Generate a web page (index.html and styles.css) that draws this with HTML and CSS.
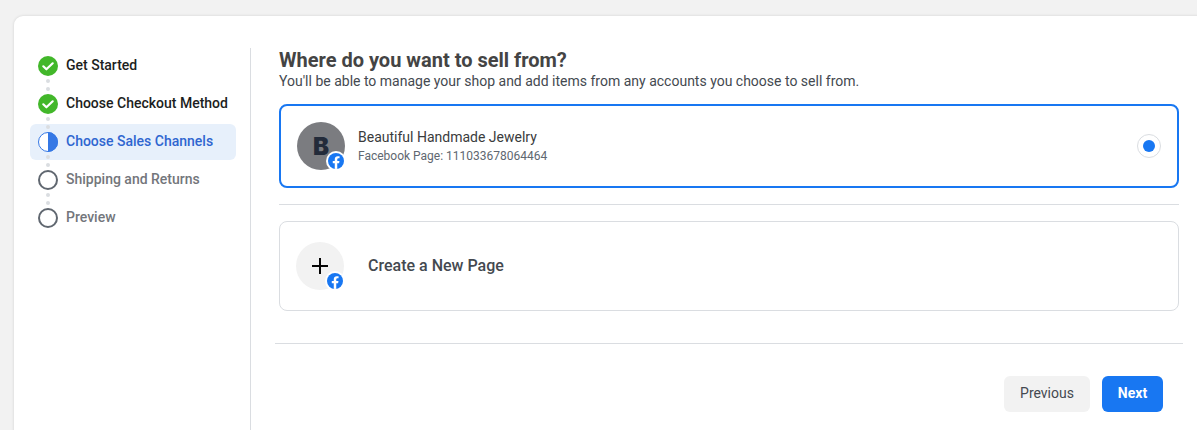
FILE: index.html
```html
<!DOCTYPE html>
<html lang="en">
<head>
<meta charset="utf-8">
<title>Where do you want to sell from?</title>
<link rel="stylesheet" href="styles.css">
</head>
<body>
<svg class="defs" width="0" height="0" aria-hidden="true">
  <symbol id="fb" viewBox="0 0 16 16">
    <circle cx="8" cy="8" r="8" fill="#1877f2"/>
    <path fill="#fff" d="M11.1 10.3l.36-2.3H9.25V6.5c0-.63.31-1.25 1.3-1.25h1V3.3s-.91-.16-1.78-.16c-1.82 0-3 1.1-3 3.1V8h-2v2.3h2v5.56a8 8 0 0 0 2.48 0V10.3z"/>
  </symbol>
  <symbol id="done" viewBox="0 0 20 20">
    <circle cx="10" cy="10" r="10" fill="#42b72a"/>
    <path fill="none" stroke="#fff" stroke-width="2.2" stroke-linecap="round" stroke-linejoin="round" d="M5.3 10.3l3.1 3 6.3-6"/>
  </symbol>
  <symbol id="half" viewBox="0 0 20 20">
    <circle cx="10" cy="10" r="9.5" fill="#fff" stroke="#3578e5" stroke-width="1"/>
    <path fill="#3578e5" d="M10 0a10 10 0 0 1 0 20z"/>
  </symbol>
  <symbol id="todo" viewBox="0 0 20 20">
    <circle cx="10" cy="10" r="9" fill="none" stroke="#606770" stroke-width="2"/>
  </symbol>
</svg>
<main class="card">
  <nav class="steps">
    <div class="step step-done"><svg class="step-icon"><use href="#done"/></svg><span>Get Started</span></div>
    <div class="dots"><i></i><i></i></div>
    <div class="step step-done"><svg class="step-icon"><use href="#done"/></svg><span>Choose Checkout Method</span></div>
    <div class="dots"><i></i><i></i></div>
    <div class="step step-active"><svg class="step-icon"><use href="#half"/></svg><span>Choose Sales Channels</span></div>
    <div class="dots"><i></i><i></i></div>
    <div class="step step-todo"><svg class="step-icon"><use href="#todo"/></svg><span>Shipping and Returns</span></div>
    <div class="dots"><i></i><i></i></div>
    <div class="step step-todo"><svg class="step-icon"><use href="#todo"/></svg><span>Preview</span></div>
  </nav>
  <section class="content">
    <div class="inner">
      <h1>Where do you want to sell from?</h1>
      <p class="lead">You'll be able to manage your shop and add items from any accounts you choose to sell from.</p>
      <div class="option option-selected">
        <div class="avatar avatar-page">B<span class="badge"><svg><use href="#fb"/></svg></span></div>
        <div class="option-text">
          <div class="page-name">Beautiful Handmade Jewelry</div>
          <div class="page-id">Facebook Page: 111033678064464</div>
        </div>
        <div class="radio"><i></i></div>
      </div>
      <hr class="rule">
      <div class="option option-new">
        <div class="avatar avatar-new">
          <svg class="plus" viewBox="0 0 16 16"><path d="M8 0v16M0 8h16" stroke="#050505" stroke-width="2" fill="none"/></svg>
          <span class="badge"><svg><use href="#fb"/></svg></span>
        </div>
        <div class="new-label">Create a New Page</div>
      </div>
    </div>
    <hr class="rule rule-wide">
    <div class="actions">
      <button class="btn btn-prev" type="button">Previous</button>
      <button class="btn btn-next" type="button">Next</button>
    </div>
  </section>
</main>
</body>
</html>
```
FILE: styles.css
```css
* { box-sizing: border-box; }
html, body { height: 100%; }
body {
  margin: 0;
  height: 430px;
  overflow: hidden;
  background: #f2f2f2;
  padding: 16px 0 0 14px;
  font-family: Roboto, "Liberation Sans", sans-serif;
  color: #444950;
}
.defs { display: block; height: 0; }
.card {
  display: flex;
  width: 1200px;
  height: 430px;
  background: #fff;
  border-radius: 9px 0 0 0;
  box-shadow: 0 0 3px rgba(0, 0, 0, .14);
  padding: 32px 0 0 16px;
}
.steps {
  width: 221px;
  height: 382px;
  flex: none;
  border-right: 1px solid #dadde1;
}
.step {
  width: 206px;
  height: 36px;
  display: flex;
  align-items: center;
  gap: 8px;
  padding-left: 8px;
  border-radius: 6px;
  font-size: 14px;
  font-weight: 500;
}
.step span { margin-top: -2px; }
.step-icon { width: 20px; height: 20px; flex: none; }
.step-done { color: #1c1e21; }
.step-active { color: #2f66d0; background: #e7f0fb; }
.step-todo { color: #73767b; }
.dots {
  height: 2px;
  position: relative;
  z-index: 1;
}
.dots i {
  position: absolute;
  left: 16px;
  width: 4px;
  height: 4px;
  border-radius: 50%;
  background: #dadde1;
}
.dots i:first-child { top: -5px; }
.dots i:last-child { top: 3px; }
.content {
  flex: none;
  width: 908px;
  margin-left: 24px;
}
.inner { width: 900px; margin-left: 4px; }
h1 {
  margin: 0;
  font-size: 20px;
  line-height: 24px;
  font-weight: 700;
  color: #444;
}
.lead {
  margin: 0;
  font-size: 14px;
  line-height: 18px;
  color: #444950;
  height: 21px;
}
.option {
  display: flex;
  align-items: center;
  width: 900px;
  background: #fff;
}
.option-selected {
  height: 84px;
  border: 2px solid #1877f2;
  border-radius: 8px;
  padding: 0 16px;
  margin-top: 11px;
}
.option-new {
  height: 90px;
  border: 1px solid #dadde1;
  border-radius: 8px;
  padding: 0 16px;
}
.avatar {
  position: relative;
  width: 48px;
  height: 48px;
  flex: none;
  border-radius: 50%;
  display: flex;
  align-items: center;
  justify-content: center;
}
.avatar-page {
  background: #7b7c80;
  color: #232b3a;
  font-family: Inter, "Liberation Sans", sans-serif;
  font-size: 24px;
  font-weight: 900;
}
.avatar-new { background: #f2f2f2; }
.plus { width: 16px; height: 16px; }
.badge {
  position: absolute;
  right: -1px;
  bottom: -1px;
  width: 20px;
  height: 20px;
  padding: 2px;
  border-radius: 50%;
  background: #fff;
  display: flex;
}
.badge svg { width: 16px; height: 16px; }
.option-text { margin-left: 13px; flex: 1; }
.page-name { font-size: 14px; line-height: 18px; color: #3a3b3c; }
.page-id { font-size: 12px; line-height: 16px; margin-top: 2px; color: #606770; }
.radio {
  width: 24px;
  height: 24px;
  border: 1px solid #dadde1;
  border-radius: 50%;
  display: flex;
  align-items: center;
  justify-content: center;
}
.radio i {
  width: 12px;
  height: 12px;
  border-radius: 50%;
  background: #1877f2;
}
.new-label {
  margin: -2px 0 0 24px;
  font-size: 16px;
  font-weight: 500;
  color: #444950;
}
.rule {
  border: 0;
  height: 1px;
  margin: 16px 0;
  background: #dadde1;
}
.rule-wide { margin: 32px 0 0 0; }
.actions {
  display: flex;
  justify-content: flex-end;
  gap: 12px;
  padding: 32px 20px 0 0;
}
.btn {
  height: 36px;
  border: 0;
  border-radius: 6px;
  padding: 0 0 2px;
  font-family: inherit;
  font-size: 14px;
}
.btn-prev { width: 86px; background: #f2f2f2; color: #444950; }
.btn-next { width: 61px; background: #1877f2; color: #fff; font-weight: 700; }
```
